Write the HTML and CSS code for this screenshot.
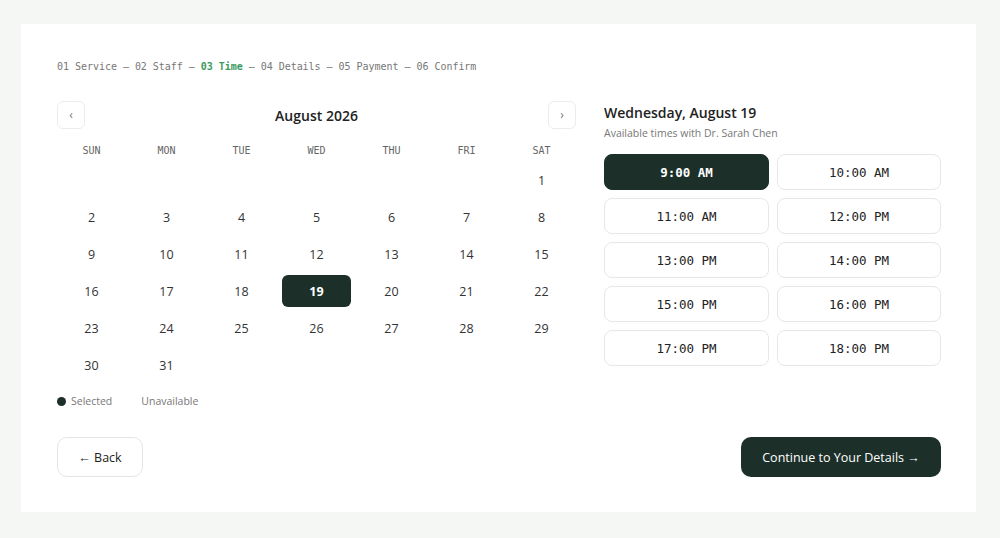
FILE: index.html
```html
<!DOCTYPE html>
<html>
<head>
<meta charset="utf-8">
<link rel="stylesheet" href="styles.css">
</head>
<body>
<div class="card">
  <div class="steps">01 Service — 02 Staff — <span class="active">03 Time</span> — 04 Details — 05 Payment — 06 Confirm</div>
  <div class="main">
    <div class="cal">
      <div class="cal-head">
        <button class="nav">‹</button>
        <div class="month">August 2026</div>
        <button class="nav">›</button>
      </div>
      <div class="grid">
        <div class="wd">SUN</div><div class="wd">MON</div><div class="wd">TUE</div><div class="wd">WED</div><div class="wd">THU</div><div class="wd">FRI</div><div class="wd">SAT</div>
        <div></div><div></div><div></div><div></div><div></div><div></div><div class="d">1</div>
        <div class="d">2</div><div class="d">3</div><div class="d">4</div><div class="d">5</div><div class="d">6</div><div class="d">7</div><div class="d">8</div>
        <div class="d">9</div><div class="d">10</div><div class="d">11</div><div class="d">12</div><div class="d">13</div><div class="d">14</div><div class="d">15</div>
        <div class="d">16</div><div class="d">17</div><div class="d">18</div><div class="d sel">19</div><div class="d">20</div><div class="d">21</div><div class="d">22</div>
        <div class="d">23</div><div class="d">24</div><div class="d">25</div><div class="d">26</div><div class="d">27</div><div class="d">28</div><div class="d">29</div>
        <div class="d">30</div><div class="d">31</div>
      </div>
      <div class="legend">
        <span class="lg"><span class="dot"></span>Selected</span>
        <span class="lg">Unavailable</span>
      </div>
    </div>
    <div class="times">
      <div class="day">Wednesday, August 19</div>
      <div class="sub">Available times with Dr. Sarah Chen</div>
      <div class="slots">
        <button class="slot on">9:00 AM</button>
        <button class="slot">10:00 AM</button>
        <button class="slot">11:00 AM</button>
        <button class="slot">12:00 PM</button>
        <button class="slot">13:00 PM</button>
        <button class="slot">14:00 PM</button>
        <button class="slot">15:00 PM</button>
        <button class="slot">16:00 PM</button>
        <button class="slot">17:00 PM</button>
        <button class="slot">18:00 PM</button>
      </div>
    </div>
  </div>
  <div class="actions">
    <button class="back">← Back</button>
    <button class="cont">Continue to Your Details →</button>
  </div>
</div>
</body>
</html>
```

FILE: styles.css
```css
* { box-sizing: border-box; }
html, body { margin: 0; padding: 0; }
body {
  background: #f5f7f4;
  font-family: "Open Sans", "Noto Sans", sans-serif;
  color: #222;
  padding: 24px 24px 26px 21px;
}
button { font-family: inherit; cursor: pointer; }
.card {
  background: #fff;
  width: 955px;
  height: 488px;
  padding: 37px 35px 35px 36px;
  display: flex;
  flex-direction: column;
}
.steps {
  font-family: "DejaVu Sans Mono", monospace;
  font-size: 10px;
  color: #777;
  line-height: 12px;
  letter-spacing: -0.03px;
}
.steps .active { color: #3b9a5e; font-weight: bold; }
.main {
  display: flex;
  gap: 28px;
  margin-top: 28px;
}
.cal { width: 519px; }
.cal-head {
  display: flex;
  justify-content: space-between;
  align-items: center;
  height: 28px;
}
.nav {
  width: 28px; height: 28px;
  border: 1px solid #ececec;
  background: #fff;
  border-radius: 6px;
  color: #777;
  font-size: 12px;
  padding: 0;
  line-height: 1;
}
.month { font-size: 14px; font-weight: 600; color: #222; }
.grid {
  display: grid;
  grid-template-columns: repeat(7, 69px);
  grid-template-rows: 20px;
  grid-auto-rows: 32px;
  column-gap: 6px;
  row-gap: 5px;
  margin-top: 10px;
}
.wd {
  font-family: "DejaVu Sans Mono", monospace;
  font-size: 10px;
  color: #666;
  text-align: center;
  line-height: 20px;
  padding-top: 2px;
}
.d {
  display: flex; align-items: center; justify-content: center;
  font-size: 12.5px;
  color: #333;
  border-radius: 6px;
  padding-top: 1px;
}
.d.sel { background: #1c2f29; color: #fff; font-weight: 700; }
.legend {
  display: flex;
  gap: 29px;
  margin-top: 13px;
  font-size: 10.5px;
  line-height: 14px;
  color: #777;
}
.lg { display: flex; align-items: center; gap: 5px; }
.dot { width: 9px; height: 9px; border-radius: 50%; background: #1c2f29; }
.times { width: 337px; }
.day { font-size: 14px; font-weight: 600; color: #222; line-height: 20px; margin-top: 2px; }
.sub { font-size: 10.5px; color: #777; margin-top: 3px; line-height: 15px; }
.slots {
  display: grid;
  grid-template-columns: 165px 164px;
  column-gap: 8px;
  row-gap: 8px;
  grid-auto-rows: 36px;
  margin-top: 13px;
}
.slot {
  background: #fff;
  border: 1px solid #e5e8e5;
  border-radius: 8px;
  font-family: "DejaVu Sans Mono", monospace;
  font-size: 12.5px;
  color: #222;
}
.slot.on { background: #1c2f29; border-color: #1c2f29; color: #fff; font-weight: bold; }
.actions {
  display: flex;
  justify-content: space-between;
  margin-top: auto;
}
.back {
  width: 86px; height: 40px;
  background: #fff;
  border: 1px solid #e3e6e3;
  border-radius: 10px;
  font-size: 12.5px;
  color: #222;
}
.cont {
  width: 200px; height: 40px;
  background: #1c2f29;
  border: none;
  border-radius: 10px;
  color: #fff;
  font-size: 12.5px;
}
```
